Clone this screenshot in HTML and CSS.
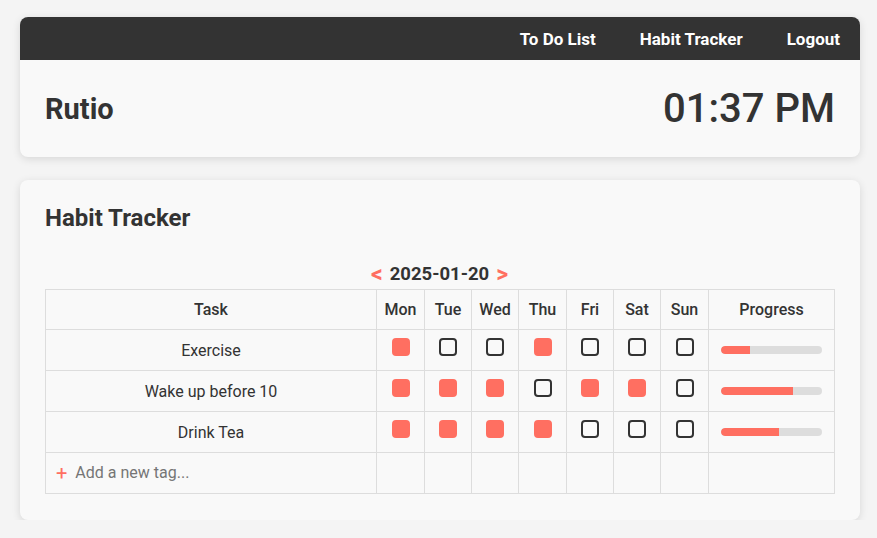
FILE: index.html
```html
<!DOCTYPE html>
<html lang="en">
<head>
<meta charset="utf-8">
<title>Rutio</title>
<link rel="stylesheet" href="styles.css">
</head>
<body>
<div class="container">
  <header class="card header-card">
    <nav class="navbar">
      <a class="nav-link" href="#">To Do List</a>
      <a class="nav-link" href="#">Habit Tracker</a>
      <a class="nav-link" href="#">Logout</a>
    </nav>
    <div class="header-main">
      <h1 class="brand">Rutio</h1>
      <div class="clock">01:37 PM</div>
    </div>
  </header>

  <section class="card tracker-card">
    <h2 class="section-title">Habit Tracker</h2>
    <div class="date-nav">
      <span class="arrow">&lt;</span>
      <span class="date">2025-01-20</span>
      <span class="arrow">&gt;</span>
    </div>
    <table class="habit-table">
      <colgroup>
        <col class="col-task">
        <col class="col-day48"><col class="col-day47"><col class="col-day47"><col class="col-day48"><col class="col-day47"><col class="col-day47"><col class="col-day48">
        <col class="col-progress">
      </colgroup>
      <thead>
        <tr>
          <th>Task</th><th>Mon</th><th>Tue</th><th>Wed</th><th>Thu</th><th>Fri</th><th>Sat</th><th>Sun</th><th>Progress</th>
        </tr>
      </thead>
      <tbody>
        <tr>
          <td class="task">Exercise</td>
          <td><span class="box checked"></span></td>
          <td><span class="box"></span></td>
          <td><span class="box"></span></td>
          <td><span class="box checked"></span></td>
          <td><span class="box"></span></td>
          <td><span class="box"></span></td>
          <td><span class="box"></span></td>
          <td class="progress-cell"><div class="bar"><div class="fill" style="width: 28.57%"></div></div></td>
        </tr>
        <tr>
          <td class="task">Wake up before 10</td>
          <td><span class="box checked"></span></td>
          <td><span class="box checked"></span></td>
          <td><span class="box checked"></span></td>
          <td><span class="box"></span></td>
          <td><span class="box checked"></span></td>
          <td><span class="box checked"></span></td>
          <td><span class="box"></span></td>
          <td class="progress-cell"><div class="bar"><div class="fill" style="width: 71.43%"></div></div></td>
        </tr>
        <tr>
          <td class="task">Drink Tea</td>
          <td><span class="box checked"></span></td>
          <td><span class="box checked"></span></td>
          <td><span class="box checked"></span></td>
          <td><span class="box checked"></span></td>
          <td><span class="box"></span></td>
          <td><span class="box"></span></td>
          <td><span class="box"></span></td>
          <td class="progress-cell"><div class="bar"><div class="fill" style="width: 57.14%"></div></div></td>
        </tr>
        <tr class="add-row">
          <td class="add-cell"><span class="plus">+</span><input class="add-input" type="text" placeholder="Add a new tag..."></td>
          <td></td><td></td><td></td><td></td><td></td><td></td><td></td><td></td>
        </tr>
      </tbody>
    </table>
  </section>
</div>
</body>
</html>
```

FILE: styles.css
```css
* { box-sizing: border-box; }

body {
  margin: 0;
  background: #f4f4f4;
  font-family: Roboto, "Liberation Sans", sans-serif;
  color: #333;
}

.container {
  width: 840px;
  margin: 17px 0 0 20px;
}

.card {
  background: #f9f9f9;
  border-radius: 8px;
  box-shadow: 0 2px 8px rgba(0, 0, 0, 0.12);
}

.navbar {
  display: flex;
  justify-content: flex-end;
  align-items: center;
  gap: 44px;
  height: 43px;
  padding: 0 20px;
  background: #333;
  border-radius: 8px 8px 0 0;
}

.nav-link {
  color: #fff;
  text-decoration: none;
  font-size: 17px;
  font-weight: 700;
}

.header-main {
  display: flex;
  justify-content: space-between;
  align-items: center;
  height: 97px;
  padding: 0 25px 0 25px;
}

.brand {
  margin: 0;
  font-size: 29px;
  font-weight: 700;
  color: #333;
}

.clock {
  font-size: 40px;
  font-weight: 500;
  color: #333;
}

.tracker-card {
  margin-top: 23px;
  padding: 24px 26px 26px 25px;
}

.section-title {
  margin: 0 0 30px;
  font-size: 24px;
  line-height: 28px;
  font-weight: 700;
}

.date-nav {
  display: flex;
  justify-content: center;
  align-items: center;
  gap: 7px;
  height: 24px;
  font-weight: 700;
  margin-bottom: 3px;
}

.date {
  font-size: 18.5px;
}

.arrow {
  color: #ff6f61;
  font-size: 23px;
}

.habit-table {
  width: 789px;
  border-collapse: collapse;
  table-layout: fixed;
  font-size: 16px;
}

.col-task { width: 331px; }
.col-day48 { width: 48px; }
.col-day47 { width: 47px; }
.col-progress { width: 126px; }

.habit-table th,
.habit-table td {
  border: 1px solid #ddd;
  text-align: center;
  vertical-align: middle;
}

.habit-table th {
  font-weight: 500;
  padding: 10px 0;
  line-height: 19px;
}

.habit-table td {
  padding: 8px 0 9px;
  height: 41px;
  line-height: 20px;
}

.habit-table td.task {
  padding: 11px 0 9px;
}

.box {
  display: block;
  width: 18px;
  height: 18px;
  margin: 0 auto 5px;
  border: 2px solid #333;
  border-radius: 4px;
}

.box.checked {
  background: #ff6f61;
  border-color: #ff6f61;
}

.progress-cell {
  padding: 0 12px 0 12px !important;
}

.bar {
  height: 8px;
  width: 101px;
  background: #ddd;
  border-radius: 4px;
  overflow: hidden;
}

.fill {
  height: 100%;
  background: #ff6f61;
  border-radius: 4px 0 0 4px;
}

.add-cell {
  text-align: left !important;
  padding: 10px 10px !important;
}

.plus {
  color: #ff6f61;
  font-size: 20px;
  line-height: 20px;
  margin-right: 8px;
  vertical-align: top;
}

.add-input {
  border: none;
  background: transparent;
  font-family: inherit;
  font-size: 16px;
  color: #333;
  padding: 0;
  width: 250px;
  outline: none;
}

.add-input::placeholder {
  color: #757575;
}
```
